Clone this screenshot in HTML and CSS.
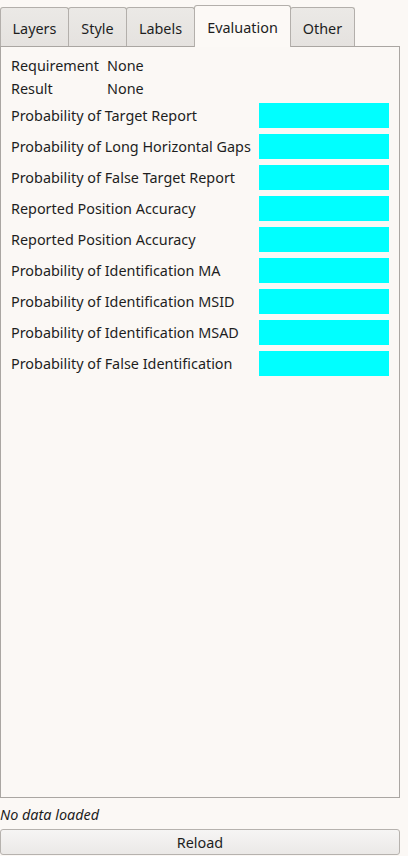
FILE: index.html
```html
<!DOCTYPE html>
<html>
<head>
<meta charset="utf-8">
<link rel="stylesheet" href="styles.css">
</head>
<body>
<div class="tabbar">
  <div class="tab t-layers">Layers</div>
  <div class="tab t-style">Style</div>
  <div class="tab t-labels">Labels</div>
  <div class="tab active t-eval">Evaluation</div>
  <div class="tab t-other">Other</div>
</div>
<div class="pane">
  <div class="info">
    <span>Requirement</span><span>None</span>
    <span>Result</span><span>None</span>
  </div>
  <div class="rows">
    <span class="lbl">Probability of Target Report</span><span class="bar"></span>
    <span class="lbl">Probability of Long Horizontal Gaps</span><span class="bar"></span>
    <span class="lbl">Probability of False Target Report</span><span class="bar"></span>
    <span class="lbl">Reported Position Accuracy</span><span class="bar"></span>
    <span class="lbl">Reported Position Accuracy</span><span class="bar"></span>
    <span class="lbl">Probability of Identification MA</span><span class="bar"></span>
    <span class="lbl">Probability of Identification MSID</span><span class="bar"></span>
    <span class="lbl">Probability of Identification MSAD</span><span class="bar"></span>
    <span class="lbl">Probability of False Identification</span><span class="bar"></span>
  </div>
</div>
<div class="status">No data loaded</div>
<button class="reload">Reload</button>
</body>
</html>
```
FILE: styles.css
```css
html, body {
  margin: 0;
  padding: 0;
  background: #fbf8f5;
}
body {
  width: 408px;
  height: 856px;
  font-family: "Noto Sans", "Open Sans", sans-serif;
  font-size: 14.4px;
  color: #1e1e1e;
  overflow: hidden;
}
.tabbar {
  display: flex;
  align-items: flex-end;
  height: 47px;
  position: relative;
  z-index: 1;
}
.tab {
  box-sizing: border-box;
  height: 39px;
  margin-bottom: 1px;
  border: 1px solid #b3afab;
  border-bottom: none;
  border-radius: 3px 3px 0 0;
  background: linear-gradient(#ebe9e6, #e5e2df);
  display: flex;
  align-items: center;
  justify-content: center;
  padding-top: 3px;
  margin-right: -1px;
}
.t-layers { width: 69px; }
.t-style { width: 59px; }
.t-labels { width: 69px; }
.t-eval { width: 97px; }
.t-other { width: 65px; }
.tab.active {
  height: 42px;
  margin-bottom: 0;
  background: #fcf9f6;
  padding-top: 2px;
  padding-bottom: 0;
}
.pane {
  box-sizing: border-box;
  width: 400px;
  height: 752px;
  margin-top: -1px;
  border: 1px solid #aaa6a2;
  padding: 7px 10px 0 10px;
}
.info {
  display: grid;
  grid-template-columns: 96px auto;
  grid-auto-rows: 23px;
  align-items: center;
}
.rows {
  display: grid;
  grid-template-columns: 1fr 130px;
  grid-auto-rows: 25px;
  row-gap: 6px;
  align-items: center;
  margin-top: 3px;
}
.bar {
  display: block;
  height: 25px;
  background: #00ffff;
}
.status {
  font-style: italic;
  height: 31px;
  line-height: 34px;
}
.reload {
  display: block;
  box-sizing: border-box;
  width: 400px;
  height: 26px;
  margin: 0;
  border: 1px solid #b6b2ae;
  border-radius: 3px;
  background: linear-gradient(#f6f5f4, #ebe9e7);
  font-family: inherit;
  font-size: 14.4px;
  color: #1e1e1e;
}
```
